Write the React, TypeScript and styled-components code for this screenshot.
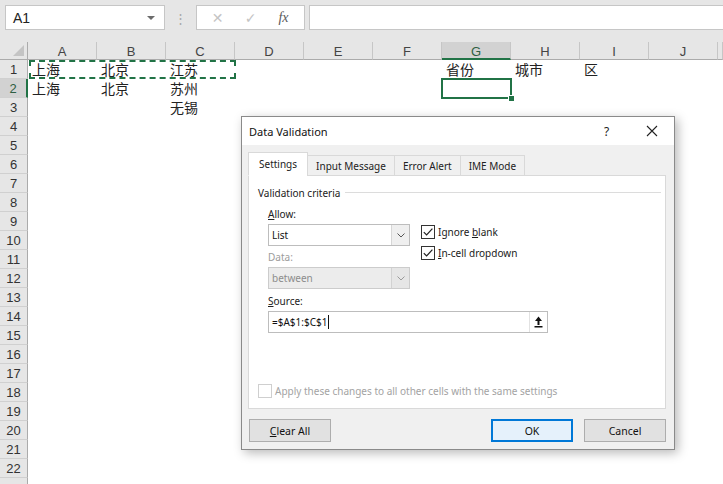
import styled, { createGlobalStyle } from "styled-components";

const GlobalStyle = createGlobalStyle`
  html, body {
    margin: 0;
    padding: 0;
  }
  body {
    background: #ffffff;
    font-family: "Noto Sans", "Liberation Sans", sans-serif;
    overflow: hidden;
  }
`;

const Window = styled.div`
  position: relative;
  width: 723px;
  height: 484px;
  overflow: hidden;
  display: flex;
  flex-direction: column;
`;

// ---- formula bar ----

const FormulaBar = styled.div`
  flex: none;
  height: 42px;
  box-sizing: border-box;
  padding: 5px 0 0 5px;
  background: #e6e6e6;
  display: flex;
  align-items: flex-start;
`;

const NameBox = styled.div`
  width: 160px;
  height: 25px;
  box-sizing: border-box;
  background: #fff;
  border: 1px solid #c6c6c6;
  display: flex;
  align-items: center;
  justify-content: space-between;
  padding: 0 9px 0 7px;
  font-family: "Liberation Sans", sans-serif;
  font-size: 14px;
  color: #222;
`;

const DropTriangle = styled.span`
  width: 0;
  height: 0;
  border-left: 4px solid transparent;
  border-right: 4px solid transparent;
  border-top: 4px solid #6b6b6b;
`;

const Grip = styled.div`
  width: 31px;
  height: 25px;
  display: flex;
  align-items: center;
  justify-content: center;
  color: #a8a8a8;
  font-size: 13px;
`;

const FxBox = styled.div`
  width: 109px;
  height: 25px;
  box-sizing: border-box;
  background: #fff;
  border: 1px solid #c6c6c6;
  display: flex;
  align-items: center;
  justify-content: space-around;
  padding: 0 4px;
`;

const FxGlyph = styled.span<{ $dark?: boolean }>`
  width: 28px;
  text-align: center;
  font-family: ${(p) => (p.$dark ? '"Liberation Serif", serif' : '"DejaVu Sans", sans-serif')};
  font-style: ${(p) => (p.$dark ? "italic" : "normal")};
  font-size: 14px;
  color: ${(p) => (p.$dark ? "#5a5a5a" : "#c4c4c4")};
`;

const FormulaInput = styled.div`
  flex: 1;
  margin-left: 4px;
  height: 25px;
  box-sizing: border-box;
  background: #fff;
  border: 1px solid #c6c6c6;
  border-right: none;
`;

// ---- sheet grid ----

const Sheet = styled.div`
  position: relative;
  flex: 1;
  display: grid;
  grid-template-columns: 28px repeat(10, 69px) 1fr;
  grid-template-rows: 18px;
  grid-auto-rows: 19px;
  overflow: hidden;
  font-family: "Liberation Sans", sans-serif;
`;

const Corner = styled.div`
  position: relative;
  background: #e6e6e6;
  border-right: 1px solid #ababab;
  border-bottom: 1px solid #ababab;
  box-sizing: border-box;

  &::after {
    content: "";
    position: absolute;
    right: 3px;
    bottom: 3px;
    width: 0;
    height: 0;
    border-left: 11px solid transparent;
    border-bottom: 11px solid #c4c4c4;
  }
`;

const ColHead = styled.div<{ $active?: boolean }>`
  box-sizing: border-box;
  background: ${(p) => (p.$active ? "#d2d2d2" : "#e6e6e6")};
  border-right: 1px solid #c6c6c6;
  border-bottom: ${(p) => (p.$active ? "2px solid #217346" : "1px solid #ababab")};
  display: flex;
  align-items: center;
  justify-content: center;
  font-size: 13px;
  color: ${(p) => (p.$active ? "#2f5f43" : "#444")};
  padding-top: 2px;
`;

const RowHead = styled.div<{ $active?: boolean }>`
  box-sizing: border-box;
  background: ${(p) => (p.$active ? "#d2d2d2" : "#e6e6e6")};
  border-bottom: 1px solid #d0d0d0;
  border-right: ${(p) => (p.$active ? "2px solid #217346" : "1px solid #ababab")};
  display: flex;
  align-items: center;
  justify-content: center;
  font-size: 13px;
  color: ${(p) => (p.$active ? "#2f5f43" : "#333")};
  padding-top: 1px;
`;

const Cell = styled.div<{ $selected?: boolean }>`
  position: relative;
  display: flex;
  align-items: flex-end;
  padding: 0 0 1px 4px;
  font-family: "Noto Sans CJK SC", "Noto Sans", sans-serif;
  font-size: 14px;
  line-height: 17px;
  color: #222;
  white-space: nowrap;

  ${(p) =>
    p.$selected &&
    `
    &::before {
      content: "";
      position: absolute;
      left: -1px;
      top: -1px;
      right: -1px;
      bottom: -1px;
      border: 2px solid #217346;
    }
    &::after {
      content: "";
      position: absolute;
      right: -4px;
      bottom: -4px;
      width: 5px;
      height: 5px;
      background: #217346;
      border: 1px solid #fff;
    }
  `}
`;

const Marquee = styled.div`
  position: absolute;
  left: 29px;
  top: 18px;
  width: 207px;
  height: 19px;
  box-sizing: border-box;
  border: 2px dashed #217346;
  pointer-events: none;
`;

// ---- dialog ----

const Dialog = styled.div`
  position: absolute;
  left: 241px;
  top: 116px;
  width: 434px;
  height: 334px;
  box-sizing: border-box;
  border: 1px solid #8a8a8a;
  background: #f0f0f0;
  box-shadow: 3px 3px 10px rgba(0, 0, 0, 0.28);
  display: flex;
  flex-direction: column;
  font-size: 10px;
  color: #1a1a1a;
`;

const TitleBar = styled.div`
  flex: none;
  height: 28px;
  background: #fff;
  display: flex;
  align-items: center;
  padding-left: 7px;
`;

const Title = styled.div`
  flex: 1;
  font-size: 11px;
  color: #111;
`;

const TitleButton = styled.div`
  width: 45px;
  height: 28px;
  display: flex;
  align-items: center;
  justify-content: center;
  font-size: 12px;
  color: #222;
`;

const DialogBody = styled.div`
  flex: 1;
  display: flex;
  flex-direction: column;
  padding: 7px 8px 7px 6px;
`;

const TabStrip = styled.div`
  display: flex;
  align-items: flex-end;
  height: 24px;
  position: relative;
  z-index: 1;
  margin-bottom: -1px;
`;

const Tab = styled.div<{ $active?: boolean }>`
  box-sizing: border-box;
  height: ${(p) => (p.$active ? "24px" : "21px")};
  padding: 0 ${(p) => (p.$active ? "10px" : "8px")};
  display: flex;
  align-items: center;
  background: ${(p) => (p.$active ? "#fff" : "#f0f0f0")};
  border: 1px solid #d9d9d9;
  border-bottom: ${(p) => (p.$active ? "1px solid #fff" : "1px solid #d9d9d9")};
  margin-left: ${(p) => (p.$active ? "0" : "-1px")};
  color: #222;
`;

const Panel = styled.div`
  height: 234px;
  box-sizing: border-box;
  background: #fff;
  border: 1px solid #d9d9d9;
  padding: 10px 4px 0 9px;
  display: flex;
  flex-direction: column;
`;

const GroupHeading = styled.div`
  display: flex;
  align-items: center;
  gap: 5px;
  height: 13px;

  &::after {
    content: "";
    flex: 1;
    height: 1px;
    background: #dcdcdc;
  }
`;

const CriteriaRow = styled.div`
  display: flex;
  padding-left: 10px;
  margin-top: 9px;
`;

const FieldColumn = styled.div`
  width: 142px;
  display: flex;
  flex-direction: column;
`;

const FieldLabel = styled.div<{ $disabled?: boolean }>`
  height: 13px;
  line-height: 13px;
  margin-bottom: 3px;
  color: ${(p) => (p.$disabled ? "#9c9c9c" : "#222")};
`;

const Combo = styled.div<{ $disabled?: boolean }>`
  height: 22px;
  box-sizing: border-box;
  display: flex;
  background: ${(p) => (p.$disabled ? "#ececec" : "#fff")};
  border: 1px solid ${(p) => (p.$disabled ? "#cccccc" : "#bdbdbd")};
  margin-bottom: 5px;
`;

const ComboText = styled.div<{ $disabled?: boolean }>`
  flex: 1;
  display: flex;
  align-items: center;
  padding-left: 3px;
  color: ${(p) => (p.$disabled ? "#8d8d8d" : "#111")};
`;

const ComboButton = styled.div<{ $disabled?: boolean }>`
  width: 17px;
  display: flex;
  align-items: center;
  justify-content: center;
  background: ${(p) => (p.$disabled ? "#e6e6e6" : "#efefef")};
  border-left: 1px solid ${(p) => (p.$disabled ? "#d2d2d2" : "#d6d6d6")};
`;

const CheckColumn = styled.div`
  display: flex;
  flex-direction: column;
  gap: 7px;
  margin-left: 11px;
  padding-top: 17px;
`;

const CheckRow = styled.div<{ $disabled?: boolean }>`
  display: flex;
  align-items: center;
  gap: 3px;
  height: 14px;
  color: ${(p) => (p.$disabled ? "#a3a3a3" : "#1a1a1a")};
`;

const Box = styled.span<{ $disabled?: boolean }>`
  width: 14px;
  height: 14px;
  box-sizing: border-box;
  flex: none;
  border: 1px solid ${(p) => (p.$disabled ? "#cfcfcf" : "#333")};
  background: #fff;
  display: flex;
  align-items: center;
  justify-content: center;
`;

const SourceBlock = styled.div`
  padding-left: 10px;
  padding-top: 1px;
  display: flex;
  flex-direction: column;
`;

const SourceInput = styled.div`
  width: 280px;
  height: 22px;
  box-sizing: border-box;
  border: 1px solid #bdbdbd;
  display: flex;
  align-items: center;
`;

const SourceText = styled.div`
  flex: 1;
  padding-left: 3px;
  display: flex;
  align-items: center;
  color: #111;
`;

const Caret = styled.span`
  width: 1px;
  height: 14px;
  background: #111;
  margin-left: 1px;
`;

const RangeButton = styled.div`
  width: 17px;
  height: 20px;
  display: flex;
  align-items: center;
  justify-content: center;
  border-left: 1px solid #e2e2e2;
`;

const ApplyRow = styled.div`
  margin-top: auto;
  margin-bottom: 10px;
`;

const ButtonRow = styled.div`
  display: flex;
  align-items: center;
  margin-top: 10px;
  padding-left: 1px;
`;

const Button = styled.div<{ $primary?: boolean }>`
  width: 82px;
  height: 23px;
  box-sizing: border-box;
  display: flex;
  align-items: center;
  justify-content: center;
  background: ${(p) => (p.$primary ? "#e5f1fb" : "#e1e1e1")};
  border: 1px solid ${(p) => (p.$primary ? "#0078d7" : "#adadad")};
  box-shadow: ${(p) => (p.$primary ? "inset 0 0 0 1px #0078d7" : "none")};
  color: #111;
  font-size: 10.5px;
`;

const Spacer = styled.div`
  flex: 1;
`;

const Gap = styled.div<{ $w: number }>`
  width: ${(p) => p.$w}px;
`;

const U = styled.span`
  text-decoration: underline;
  text-underline-offset: 1px;
`;

const Chevron = ({ color = "#555" }: { color?: string }) => (
  <svg width="8" height="5" viewBox="0 0 8 5">
    <path d="M0.5 0.5 L4 4 L7.5 0.5" fill="none" stroke={color} strokeWidth="1" />
  </svg>
);

const Tick = () => (
  <svg width="12" height="12" viewBox="0 0 12 12">
    <path d="M1.8 6.2 L4.6 9 L10.4 2.6" fill="none" stroke="#222" strokeWidth="1.2" />
  </svg>
);

const RangeIcon = () => (
  <svg width="9" height="12" viewBox="0 0 9 12">
    <path d="M4.5 0.5 L8 5 L5.5 5 L5.5 9 L3.5 9 L3.5 5 L1 5 Z" fill="#111" />
    <rect x="0.5" y="10" width="8" height="1.5" fill="#111" />
  </svg>
);

const columns = ["A", "B", "C", "D", "E", "F", "G", "H", "I", "J"];

const data: Record<string, string> = {
  A1: "上海",
  B1: "北京",
  C1: "江苏",
  G1: "省份",
  H1: "城市",
  I1: "区",
  A2: "上海",
  B2: "北京",
  C2: "苏州",
  C3: "无锡",
};

const rows = Array.from({ length: 23 }, (_, i) => i + 1);

const App = () => {
  return (
    <>
      <GlobalStyle />
      <Window>
        <FormulaBar>
          <NameBox>
            A1
            <DropTriangle />
          </NameBox>
          <Grip>⋮</Grip>
          <FxBox>
            <FxGlyph>✕</FxGlyph>
            <FxGlyph>✓</FxGlyph>
            <FxGlyph $dark>fx</FxGlyph>
          </FxBox>
          <FormulaInput />
        </FormulaBar>

        <Sheet>
          <Corner />
          {columns.map((c) => (
            <ColHead key={c} $active={c === "G"}>
              {c}
            </ColHead>
          ))}
          <ColHead />
          {rows.map((r) => (
            <>
              <RowHead key={`h${r}`} $active={r === 2}>
                {r < 23 ? r : ""}
              </RowHead>
              {columns.map((c) => (
                <Cell key={`${c}${r}`} $selected={c === "G" && r === 2}>
                  {data[`${c}${r}`]}
                </Cell>
              ))}
              <Cell key={`x${r}`} />
            </>
          ))}
          <Marquee />
        </Sheet>

        <Dialog>
          <TitleBar>
            <Title>Data Validation</Title>
            <TitleButton>?</TitleButton>
            <TitleButton>
              <svg width="12" height="12" viewBox="0 0 12 12">
                <path d="M1 1 L11 11 M11 1 L1 11" stroke="#222" strokeWidth="1.1" />
              </svg>
            </TitleButton>
          </TitleBar>
          <DialogBody>
            <TabStrip>
              <Tab $active>Settings</Tab>
              <Tab>Input Message</Tab>
              <Tab>Error Alert</Tab>
              <Tab>IME Mode</Tab>
            </TabStrip>
            <Panel>
              <GroupHeading>Validation criteria</GroupHeading>
              <CriteriaRow>
                <FieldColumn>
                  <FieldLabel>
                    <U>A</U>llow:
                  </FieldLabel>
                  <Combo>
                    <ComboText>List</ComboText>
                    <ComboButton>
                      <Chevron />
                    </ComboButton>
                  </Combo>
                  <FieldLabel $disabled>Data:</FieldLabel>
                  <Combo $disabled>
                    <ComboText $disabled>between</ComboText>
                    <ComboButton $disabled>
                      <Chevron color="#9a9a9a" />
                    </ComboButton>
                  </Combo>
                </FieldColumn>
                <CheckColumn>
                  <CheckRow>
                    <Box>
                      <Tick />
                    </Box>
                    <span>
                      Ignore <U>b</U>lank
                    </span>
                  </CheckRow>
                  <CheckRow>
                    <Box>
                      <Tick />
                    </Box>
                    <span>
                      <U>I</U>n-cell dropdown
                    </span>
                  </CheckRow>
                </CheckColumn>
              </CriteriaRow>
              <SourceBlock>
                <FieldLabel>
                  <U>S</U>ource:
                </FieldLabel>
                <SourceInput>
                  <SourceText>
                    =$A$1:$C$1
                    <Caret />
                  </SourceText>
                  <RangeButton>
                    <RangeIcon />
                  </RangeButton>
                </SourceInput>
              </SourceBlock>
              <ApplyRow>
                <CheckRow $disabled>
                  <Box $disabled />
                  <span>Apply these changes to all other cells with the same settings</span>
                </CheckRow>
              </ApplyRow>
            </Panel>
            <ButtonRow>
              <Button>
                <span>
                  <U>C</U>lear All
                </span>
              </Button>
              <Spacer />
              <Button $primary>OK</Button>
              <Gap $w={11} />
              <Button>Cancel</Button>
            </ButtonRow>
          </DialogBody>
        </Dialog>
      </Window>
    </>
  );
};

export default App;
